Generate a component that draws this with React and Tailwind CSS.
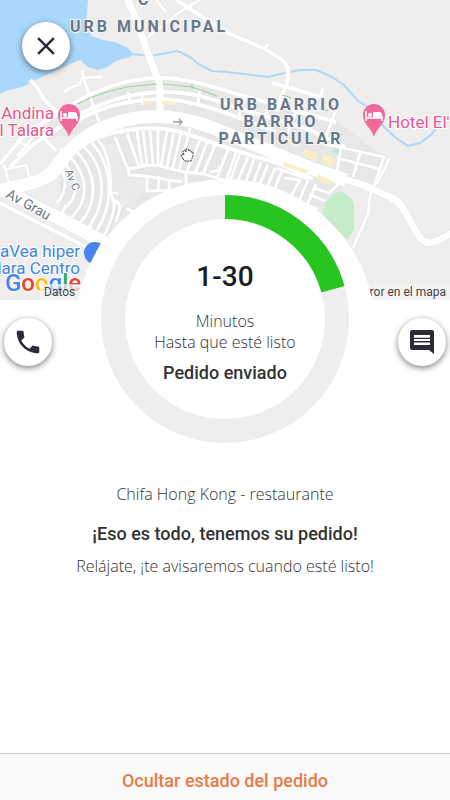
import React from 'react';
import { MdClose, MdPhone } from 'react-icons/md';

// Street paths, grouped by road width
const avenues = [
  'M-4 191 L28 184 C45 180 50 174 58 164 C72 146 88 132 112 124 C142 113 176 115 208 126 L262 148 L313 169 L346 180',
  'M4 190 L108 244',
];

const mainRoads = [
  'M126 -4 L134 14 L145 45 L155 72 C159 80 160 84 160 92 V118',
  'M340 178 L363 185 L392 198 C404 204 408 220 417 233 C424 245 432 244 439 240 L454 232',
];

const mediumRoads = [
  'M176 0 L228 33 L265 49 L278 57 C286 62 288 66 288 74 L287 84 L280 100 L276 112',
  'M272 83 L287 87 L320 97 M320 99 L323 88 M264 50 L268 44',
  'M30 80 L37 87 L43 98 L62 118 M43 137 L56 151',
  'M0 164 L26 133 L56 115 C88 92 124 78 160 78 C196 78 226 92 252 98 L336 122',
  'M10 167 L34 144 L60 127 C92 103 128 94 160 92 C192 91 212 99 238 108 L310 130 L345 147',
  'M72 124 C96 108 128 100 160 99 C190 100 212 108 240 118 L276 132',
  'M64 160 C80 145 96 137 108 134 C140 126 166 126 190 135 L240 152 L280 164 L313 179',
  'M70 156 C55 184 45 184 22 189',
  'M0 203 L92 250',
];

const smallRoads = [
  'M147 38 L178 13 L203 -2 M156 0 L166 12',
  'M82 70 L85 83 L92 102 L99 122 M64 92 L70 88 L80 84 L82 78 L102 77',
  'M13 147 L19 142 L30 147 M4 165 L10 187 M4 170 L26 165 L30 180 M17 156 L25 147 L40 128',
  'M56 163 C68 176 68 190 57 203',
  'M63 162 C80 178 80 196 63 210',
  'M70 157 C90 178 88 202 71 218',
  'M77 152 C98 174 98 204 79 224',
  'M84 147 C108 170 106 206 87 229',
  'M92 143 C114 168 114 206 95 233',
  'M98 140 C110 152 112 184 110 193 C119 203 112 220 103 238',
  'M110 192 L118 194 M111 200 C124 202 120 210 116 222 M126 208 L138 214',
  'M115 137 L124 160 L128 169 L139 167 L127 133 M137 131 L142 165 L147 164 L143 131',
  'M150 131 L153 165 M158 130 L158 165 M167 131 L161 166 M174 132 L167 167 M181 134 L172 170 M188 136 L179 171',
  'M200 140 L186 173 M207 142 L195 174 M215 145 L203 174 M228 150 L217 178 M236 153 L226 181',
  'M139 167 C160 162 170 170 184 172 L204 174 L240 185 M128 169 L129 175 L144 176 L182 182',
  'M147 176 L147 191 L174 190 M159 176 L158 191 M169 180 L169 190 M186 173 L186 188 M210 172 L220 170 L219 165',
  'M240 153 L230 181 M248 157 L238 180 M254 159 L245 184 M261 162 L252 186 M268 164 L258 188 M275 168 L265 192 M282 171 L272 195',
  'M276 168 L308 179 M284 178 L300 180 L288 201 M308 180 L295 210 M316 184 L304 212 M314 188 L329 193 L345 178',
  'M309 194 L325 201 M304 204 L318 209',
  'M335 112 L324 142 M320 143 L384 157 L374 186 M341 148 L337 172 M360 153 L353 177 M337 158 L380 169',
  'M386 166 L389 159 L377 184 M371 188 L368 214 L353 248',
  'M296 112 L286 137 M270 104 L260 128 M246 97 L238 118 M128 92 L130 104 M142 96 L143 105 M200 90 L198 103',
  'M122 124 L122 134 M190 128 L189 138 M60 148 L66 160 M54 213 L60 222 M66 205 L58 220 M92 226 L86 240',
];

const blocks = [
  'M290 136 L299 138 L297 146 L287 143 Z',
  'M304 149 L318 153 L316 161 L303 156 Z',
  'M323 154 L336 159 L333 167 L321 163 Z',
  'M284 162 L308 170 L307 174 L283 166 Z',
  'M318 174 L334 182 L331 185 L317 179 Z',
  'M143 101 L153 101 L152 104 L143 104 Z',
  'M162 101 L176 102 L175 105 L162 104 Z',
];

function BedPin({ x, y }) {
  return (
    <g transform={`translate(${x} ${y})`}>
      <path d="M0 21 C-2 12 -11 9 -11 -1 A11 11 0 0 1 11 -1 C11 9 2 12 0 21 Z" fill="#f06a9b" />
      <path d="M-8 -5 V5 M-8 2 H8 M8 5 V0" stroke="#fff" strokeWidth="1.6" fill="none" />
      <path d="M-1 -4 H5 C7 -4 8 -3 8 -1 V2 H-1 Z" fill="#fff" />
      <circle cx="-4" cy="-1" r="2" fill="#fff" />
    </g>
  );
}

function StreetMap() {
  return (
    <svg
      viewBox="0 0 450 300"
      preserveAspectRatio="xMidYMid slice"
      className="block h-full w-full font-['Roboto',sans-serif]"
      role="img"
      aria-label="Mapa"
    >
      <rect width="450" height="300" fill="#efeeed" />
      <path d="M60 168 C85 135 110 122 160 118 C200 120 230 135 345 178 L330 225 L110 240 L60 208 Z" fill="#e7e7e7" />
      <path d="M30 140 C80 92 120 78 160 80 C200 80 230 94 336 120 L384 157 L374 184 L230 140 C190 120 140 116 100 132 Z" fill="#e7e7e7" />
      <path d="M116 145 L128 172 L146 178 L146 192 L118 210 L108 180 L98 142 Z" fill="#ebebeb" />
      <path d="M0 0 H88 L86 28 L92 36 L103 40 L115 42 L128 48 L134 54 L130 57 L116 61 L106 68 L97 70 L88 67 L80 60 L68 65 L48 74 L36 80 L22 87 L6 91 L0 94 Z" fill="#a9d8fc" />
      <path
        d="M132 54 L150 56 L178 51 L190 57 L200 65 L212 71 L228 72 L268 77 L280 74 L300 70 L316 70 L330 76 L344 85 L358 101 L370 108 L384 127 L396 138 L408 146 L420 143 L432 134 L440 122 L450 117"
        fill="none"
        stroke="#aad8f8"
        strokeWidth="2"
      />
      <path d="M335 193 L343 192 L352 199 L354 206 L354 229 L348 240 L332 226 L323 213 L326 202 Z" fill="#c5ebc8" />
      <path d="M334 147 L341 149 L339 155 L332 152 Z" fill="#c5e6c8" />

      {/* Road casing first so the junctions stay clean */}
      <g fill="none" stroke="#e3e3e3" strokeLinejoin="round">
        {smallRoads.map((d) => <path key={d} d={d} strokeWidth="3.8" />)}
        {mediumRoads.map((d) => <path key={d} d={d} strokeWidth="5" />)}
        {mainRoads.map((d) => <path key={d} d={d} strokeWidth="8" />)}
        {avenues.map((d) => <path key={d} d={d} strokeWidth="14" />)}
      </g>
      <g fill="none" stroke="#fff" strokeLinejoin="round">
        {smallRoads.map((d) => <path key={d} d={d} strokeWidth="2.8" />)}
        {mediumRoads.map((d) => <path key={d} d={d} strokeWidth="4" />)}
        {mainRoads.map((d) => <path key={d} d={d} strokeWidth="7" />)}
        {avenues.map((d) => <path key={d} d={d} strokeWidth="13" />)}
      </g>
      {blocks.map((d) => <path key={d} d={d} fill="#f8efc9" />)}
      <path
        d="M77 104 L92 97 L110 91 L127 87 L157 84 M163 84 L192 87 L217 96 M192 89 V84 M282 95 L292 98 M320 108 L328 111"
        fill="none"
        stroke="#9ed3a4"
        strokeWidth="1.2"
      />
      <path d="M173 122 H182 M179 119 L182 122 L179 125" fill="none" stroke="#9aa3ad" strokeWidth="1.4" />

      <g fill="#66788a" stroke="#f4f4f4" strokeWidth="2" paintOrder="stroke" className="text-[16px] font-bold tracking-[3px]">
        <text x="138" y="5">C</text>
        <text x="70" y="32">URB MUNICIPAL</text>
        <text x="281" y="110" textAnchor="middle">URB BARRIO</text>
        <text x="281" y="127" textAnchor="middle">BARRIO</text>
        <text x="281" y="144" textAnchor="middle">PARTICULAR</text>
      </g>
      <g fill="#6a7681" stroke="#fff" strokeWidth="2" paintOrder="stroke">
        <text transform="translate(5 197) rotate(29)" className="text-[14px]">Av Grau</text>
        <text transform="translate(65 171) rotate(68)" className="text-[11px]">Av C</text>
      </g>
      <g fill="#e8568b" stroke="#fff" strokeWidth="2" paintOrder="stroke" className="text-[17px]">
        <text x="54" y="119" textAnchor="end">Andina</text>
        <text x="54" y="136" textAnchor="end">l Talara</text>
        <text x="388" y="128">Hotel El'</text>
      </g>
      <BedPin x={69} y={116} />
      <BedPin x={374} y={116} />

      <g fill="#4285e0" stroke="#fff" strokeWidth="2" paintOrder="stroke" className="text-[17px]">
        <text x="80" y="257" textAnchor="end">aVea hiper</text>
        <text x="80" y="274" textAnchor="end">lara Centro</text>
      </g>
      <circle cx="95" cy="253" r="11" fill="#4587ee" />
      <path d="M96 253 L101 244 L103 256 Z M93 263 L95 256 L99 256" fill="#fff" stroke="#fff" strokeWidth="1" />

      <text x="5" y="291" stroke="#fff" strokeWidth="2" paintOrder="stroke" className="text-[24px] font-medium">
        <tspan fill="#4285f4">G</tspan>
        <tspan fill="#ea4335">o</tspan>
        <tspan fill="#fbbc05">o</tspan>
        <tspan fill="#4285f4">g</tspan>
        <tspan fill="#34a853">l</tspan>
        <tspan fill="#ea4335">e</tspan>
      </text>

      {/* Grab cursor */}
      <path
        d="M183 159 L181 155 L183 154 L184 155 L183 151 L185 150 L186 152 L186 149 L188 149 L189 151 L190 150 L191 152 L193 152 L193 156 L191 161 H185 Z"
        fill="#fff"
        stroke="#222"
        strokeWidth="0.9"
        strokeDasharray="2 0.7"
      />
    </svg>
  );
}

function CommentIcon() {
  return (
    <svg viewBox="0 0 26 26" className="h-[26px] w-[26px]" aria-hidden="true">
      <path
        d="M3 1 H23 A2 2 0 0 1 25 3 V25 L20 21 H3 A2 2 0 0 1 1 19 V3 A2 2 0 0 1 3 1 Z M5 6 V16 H21 V6 Z"
        fill="currentColor"
        fillRule="evenodd"
      />
      <path d="M5 9.4 H21 M5 12.8 H21" stroke="currentColor" strokeWidth="1.4" />
    </svg>
  );
}

function ProgressRing({ value }) {
  const radius = 112;
  const length = 2 * Math.PI * radius;

  return (
    <svg viewBox="0 0 248 248" className="col-start-1 row-start-1 h-[248px] w-[248px]" aria-hidden="true">
      <circle cx="124" cy="124" r={radius} fill="none" stroke="#eeeeee" strokeWidth="24" />
      <circle
        cx="124"
        cy="124"
        r={radius}
        fill="none"
        stroke="#28c41f"
        strokeWidth="24"
        strokeDasharray={`${length * value} ${length}`}
        transform="rotate(-90 124 124)"
      />
    </svg>
  );
}

function RoundButton({ label, className = '', children }) {
  return (
    <button
      type="button"
      aria-label={label}
      className={`flex h-12 w-12 shrink-0 items-center justify-center rounded-full bg-white text-[#2c2c38] shadow-[0_2px_6px_rgba(0,0,0,0.5)] ${className}`}
    >
      {children}
    </button>
  );
}

export default function App() {
  return (
    <div className="flex min-h-screen flex-col bg-white font-['Roboto',sans-serif] text-[#333333]">
      <header className="relative h-[300px] overflow-hidden">
        <StreetMap />
        <RoundButton label="Cerrar" className="absolute top-[22px] left-[22px]">
          <MdClose size={30} />
        </RoundButton>
        <div className="absolute inset-x-0 bottom-0 ml-10 flex h-4 items-center justify-between bg-[#f5f5f5]/70 px-1 text-[12px] leading-4 text-[#444444]">
          <span>Datos</span>
          <a href="#error">error en el mapa</a>
        </div>
      </header>

      <main className="relative -mt-[121px] flex flex-1 flex-col">
        <div className="flex items-start justify-between px-1">
          <RoundButton label="Llamar" className="mt-[139px]">
            <MdPhone size={30} />
          </RoundButton>

          <div className="flex h-[300px] w-[300px] justify-center rounded-full bg-white pt-4">
            <div className="grid h-[248px]">
              <ProgressRing value={0.207} />
              <div className="col-start-1 row-start-1 pt-16 text-center">
                <p className="text-[28px] leading-9 font-medium text-[#1c1c1c]">1-30</p>
                <p className="mt-4 font-['Open_Sans',sans-serif] text-[16px] leading-[21px] font-light">
                  Minutos
                  <br />
                  Hasta que esté listo
                </p>
                <p className="mt-2 text-[18px] leading-6 font-medium">Pedido enviado</p>
              </div>
            </div>
          </div>

          <RoundButton label="Mensaje" className="mt-[139px]">
            <CommentIcon />
          </RoundButton>
        </div>

        <section className="mt-[3px] px-4 text-center leading-6">
          <p className="font-['Open_Sans',sans-serif] text-[16px] font-light">Chifa Hong Kong - restaurante</p>
          <h1 className="mt-4 text-[18px] font-medium">¡Eso es todo, tenemos su pedido!</h1>
          <p className="mt-2 font-['Open_Sans',sans-serif] text-[16px] font-light">
            Relájate, ¡te avisaremos cuando esté listo!
          </p>
        </section>
      </main>

      <footer className="border-t border-[#cccccc] bg-[#fafafa]">
        <button type="button" className="w-full pt-4 pb-2 text-[18px] leading-[22px] font-medium text-[#e87a45]">
          Ocultar estado del pedido
        </button>
      </footer>
    </div>
  );
}
